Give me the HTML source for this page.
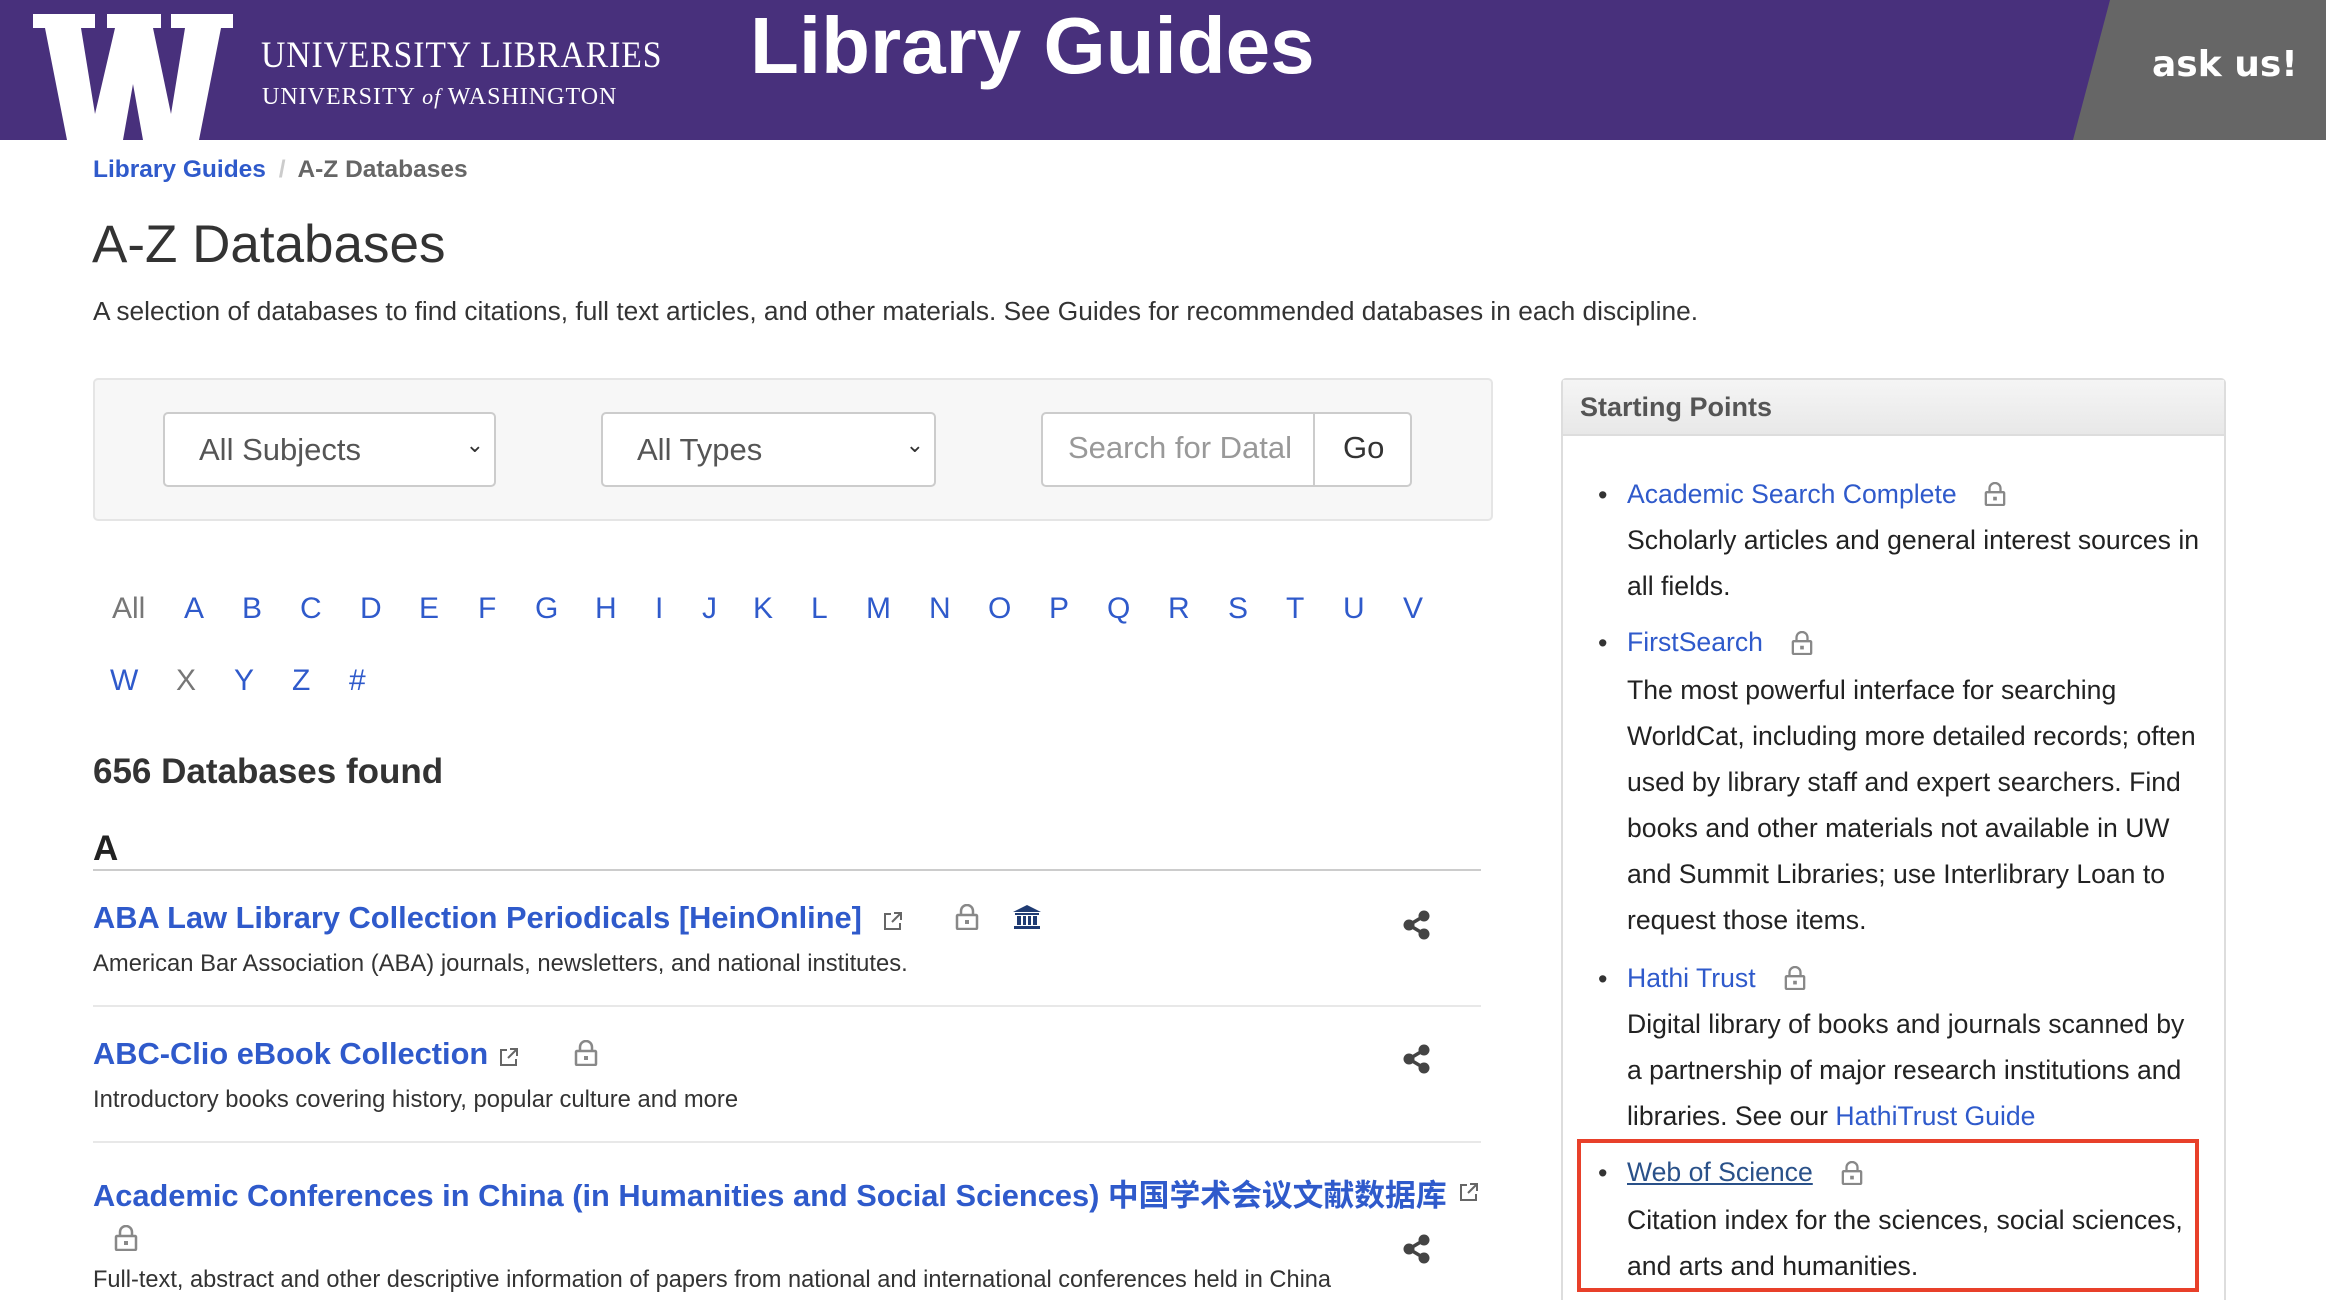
<!DOCTYPE html>
<html style="overflow:hidden;height:1300px"><head><meta charset="utf-8"><style>
*{margin:0;padding:0;box-sizing:border-box}
body{width:2326px;height:1300px;overflow:hidden;background:#fff;font-family:"Liberation Sans","Noto Sans CJK SC",sans-serif;color:#222;position:relative}
.a{position:absolute;white-space:nowrap}
.blue{color:#2f5acb}
.hdr{position:absolute;left:0;top:0;width:2326px;height:140px;background:#48307c}
.t{font-size:26.6px;color:#222;line-height:46px}
.b{position:absolute;font-size:27px;color:#333}
.lt{position:absolute;font-size:30px;color:#2f5acb;top:592px}
.lt2{position:absolute;font-size:30px;color:#2f5acb;top:664px}
</style></head><body>
<div class="hdr"></div>
<svg class="a" style="left:2070px;top:0" width="256" height="140"><polygon points="40,0 256,0 256,140 3,140" fill="#666"/></svg>
<div class="a" style="left:2152px;top:44px;font-family:'DejaVu Sans',sans-serif;font-weight:bold;font-size:36px;color:#fff">ask us!</div>
<svg class="a" style="left:33px;top:14px" width="200" height="126" viewBox="0 0 200 126"><path d="M0 0H62V14H48L62 100L82 14H74V0H128V14H120L138 100L152 14H138V0H200V14H188L166 126H110L100 70L90 126H34L12 14H0Z" fill="#fff"/></svg>
<div class="a" style="left:261px;top:34px;font-family:'Liberation Serif',serif;font-size:37px;color:#fff;letter-spacing:1px;transform:scaleX(0.91);transform-origin:left">UNIVERSITY LIBRARIES</div>
<div class="a" style="left:262px;top:84px;font-family:'Liberation Serif',serif;font-size:24px;color:#fff;letter-spacing:1px">UNIVERSITY <i style="font-size:22px">of</i> WASHINGTON</div>
<div class="a" style="left:750px;top:0px;font-size:80px;font-weight:bold;color:#fff">Library Guides</div>
<div class="a" style="left:93px;top:156px;font-size:24.5px;font-weight:bold"><span class="blue">Library Guides</span> <span style="color:#ccc;margin:0 6px">/</span> <span style="color:#666">A-Z Databases</span></div>
<div class="a" style="left:92px;top:214px;font-size:53px;color:#333">A-Z Databases</div>
<div class="a" style="left:93px;top:296px;font-size:26.3px;color:#333">A selection of databases to find citations, full text articles, and other materials. See Guides for recommended databases in each discipline.</div>
<div class="a" style="left:93px;top:378px;width:1400px;height:143px;background:#f7f7f7;border:2px solid #e5e5e5;border-radius:5px"></div>
<div class="a" style="left:163px;top:412px;width:333px;height:75px;background:#fff;border:2px solid #ccc;border-radius:5px;font-size:31px;color:#555;padding:18px 0 0 34px">All Subjects<span style="position:absolute;right:10px;top:18px;font-size:22px;color:#333">&#8964;</span></div>
<div class="a" style="left:601px;top:412px;width:335px;height:75px;background:#fff;border:2px solid #ccc;border-radius:5px;font-size:31px;color:#555;padding:18px 0 0 34px">All Types<span style="position:absolute;right:10px;top:18px;font-size:22px;color:#333">&#8964;</span></div>
<div class="a" style="left:1041px;top:412px;width:371px;height:75px;background:#fff;border:2px solid #ccc;border-radius:5px"></div>
<div class="a" style="left:1313px;top:413px;width:2px;height:73px;background:#ccc"></div>
<div class="a" style="left:1068px;top:430px;font-size:31px;color:#999">Search for Datal</div>
<div class="a" style="left:1343px;top:430px;font-size:31px;color:#333">Go</div>
<span class="lt" style="left:112px;color:#777">All</span>
<span class="lt" style="left:184px">A</span><span class="lt" style="left:242px">B</span><span class="lt" style="left:300px">C</span><span class="lt" style="left:360px">D</span><span class="lt" style="left:419px">E</span><span class="lt" style="left:478px">F</span><span class="lt" style="left:535px">G</span><span class="lt" style="left:595px">H</span><span class="lt" style="left:655px">I</span><span class="lt" style="left:702px">J</span><span class="lt" style="left:753px">K</span><span class="lt" style="left:811px">L</span><span class="lt" style="left:866px">M</span><span class="lt" style="left:929px">N</span><span class="lt" style="left:988px">O</span><span class="lt" style="left:1049px">P</span><span class="lt" style="left:1107px">Q</span><span class="lt" style="left:1168px">R</span><span class="lt" style="left:1228px">S</span><span class="lt" style="left:1286px">T</span><span class="lt" style="left:1343px">U</span><span class="lt" style="left:1403px">V</span>
<span class="lt2" style="left:110px">W</span><span class="lt2" style="left:176px;color:#777">X</span><span class="lt2" style="left:234px">Y</span><span class="lt2" style="left:292px">Z</span><span class="lt2" style="left:349px">#</span>
<div class="a" style="left:93px;top:752px;font-size:35px;font-weight:bold;color:#333">656 Databases found</div>
<div class="a" style="left:93px;top:829px;font-size:35px;font-weight:bold;color:#222">A</div>
<div class="a" style="left:93px;top:869px;width:1388px;height:2px;background:#ccc"></div>
<div class="a" style="left:93px;top:900px;font-size:30.8px;font-weight:bold;color:#2f5acb">ABA Law Library Collection Periodicals [HeinOnline]</div>
<svg class="a" style="left:882px;top:910px" width="22" height="22" viewBox="0 0 22 22" fill="none" stroke="#666" stroke-width="2"><path d="M9 4H3V19H18V13M12 3H19V10M19 3L10 12"/></svg>
<svg class="a" style="left:955px;top:904px" width="24" height="26" viewBox="0 0 24 26"><path d="M6 11V7a6 6 0 0 1 12 0v4" fill="none" stroke="#888" stroke-width="2.5"/><rect x="2" y="11" width="20" height="14" rx="1" fill="none" stroke="#888" stroke-width="2.5"/><rect x="10" y="16" width="4" height="4" fill="#888"/></svg>
<svg class="a" style="left:1013px;top:905px" width="28" height="24" viewBox="0 0 28 24"><path d="M14 0L28 7H0Z M2 8H26V10H2Z M4 11H8V20H4Z M10 11H13V20H10Z M15 11H18V20H15Z M20 11H24V20H20Z M1 21H27V24H1Z" fill="#1f3b73"/></svg>
<svg class="a" style="left:1403px;top:910px" width="28" height="30" viewBox="0 0 28 30"><g fill="#444"><circle cx="21" cy="6" r="5.5"/><circle cx="6" cy="15" r="5.5"/><circle cx="21" cy="24" r="5.5"/></g><path d="M21 6L6 15L21 24" stroke="#444" stroke-width="3.5" fill="none"/></svg>
<div class="a" style="left:93px;top:950px;font-size:23.8px;color:#333">American Bar Association (ABA) journals, newsletters, and national institutes.</div>
<div class="a" style="left:93px;top:1005px;width:1388px;height:2px;background:#e8e8e8"></div>
<div class="a" style="left:93px;top:1036px;font-size:30.8px;font-weight:bold;color:#2f5acb">ABC-Clio eBook Collection</div>
<svg class="a" style="left:498px;top:1046px" width="22" height="22" viewBox="0 0 22 22" fill="none" stroke="#666" stroke-width="2"><path d="M9 4H3V19H18V13M12 3H19V10M19 3L10 12"/></svg>
<svg class="a" style="left:574px;top:1040px" width="24" height="26" viewBox="0 0 24 26"><path d="M6 11V7a6 6 0 0 1 12 0v4" fill="none" stroke="#888" stroke-width="2.5"/><rect x="2" y="11" width="20" height="14" rx="1" fill="none" stroke="#888" stroke-width="2.5"/><rect x="10" y="16" width="4" height="4" fill="#888"/></svg>
<svg class="a" style="left:1403px;top:1044px" width="28" height="30" viewBox="0 0 28 30"><g fill="#444"><circle cx="21" cy="6" r="5.5"/><circle cx="6" cy="15" r="5.5"/><circle cx="21" cy="24" r="5.5"/></g><path d="M21 6L6 15L21 24" stroke="#444" stroke-width="3.5" fill="none"/></svg>
<div class="a" style="left:93px;top:1086px;font-size:23.8px;color:#333">Introductory books covering history, popular culture and more</div>
<div class="a" style="left:93px;top:1141px;width:1388px;height:2px;background:#e8e8e8"></div>
<div class="a" style="left:93px;top:1170px;font-size:30.8px;font-weight:bold;color:#2f5acb">Academic Conferences in China (in Humanities and Social Sciences) 中国学术会议文献数据库</div>
<svg class="a" style="left:1458px;top:1181px" width="22" height="22" viewBox="0 0 22 22" fill="none" stroke="#666" stroke-width="2"><path d="M9 4H3V19H18V13M12 3H19V10M19 3L10 12"/></svg>
<svg class="a" style="left:114px;top:1225px" width="24" height="26" viewBox="0 0 24 26"><path d="M6 11V7a6 6 0 0 1 12 0v4" fill="none" stroke="#888" stroke-width="2.5"/><rect x="2" y="11" width="20" height="14" rx="1" fill="none" stroke="#888" stroke-width="2.5"/><rect x="10" y="16" width="4" height="4" fill="#888"/></svg>
<svg class="a" style="left:1403px;top:1234px" width="28" height="30" viewBox="0 0 28 30"><g fill="#444"><circle cx="21" cy="6" r="5.5"/><circle cx="6" cy="15" r="5.5"/><circle cx="21" cy="24" r="5.5"/></g><path d="M21 6L6 15L21 24" stroke="#444" stroke-width="3.5" fill="none"/></svg>
<div class="a" style="left:93px;top:1267px;font-size:23.6px;color:#333">Full-text, abstract and other descriptive information of papers from national and international conferences held in China</div>
<div class="a" style="left:1561px;top:378px;width:665px;height:922px;border:2px solid #ddd;border-bottom:none;border-radius:5px 5px 0 0"></div>
<div class="a" style="left:1563px;top:380px;width:661px;height:56px;background:linear-gradient(#f5f5f5,#e8e8e8);border-bottom:2px solid #ddd"></div>
<div class="a" style="left:1580px;top:392px;font-size:27px;font-weight:bold;color:#555">Starting Points</div>
<div class="b" style="left:1598px;top:480px">•</div>
<div class="a t" style="left:1627px;top:471px"><span class="blue">Academic Search Complete</span></div>
<svg class="a" style="left:1984px;top:482px" width="22" height="24" viewBox="0 0 24 26"><path d="M6 11V7a6 6 0 0 1 12 0v4" fill="none" stroke="#888" stroke-width="2.5"/><rect x="2" y="11" width="20" height="14" rx="1" fill="none" stroke="#888" stroke-width="2.5"/><rect x="10" y="16" width="4" height="4" fill="#888"/></svg>
<div class="a t" style="left:1627px;top:517px">Scholarly articles and general interest sources in</div>
<div class="a t" style="left:1627px;top:563px">all fields.</div>
<div class="b" style="left:1598px;top:628px">•</div>
<div class="a t" style="left:1627px;top:619px"><span class="blue">FirstSearch</span></div>
<svg class="a" style="left:1791px;top:631px" width="22" height="24" viewBox="0 0 24 26"><path d="M6 11V7a6 6 0 0 1 12 0v4" fill="none" stroke="#888" stroke-width="2.5"/><rect x="2" y="11" width="20" height="14" rx="1" fill="none" stroke="#888" stroke-width="2.5"/><rect x="10" y="16" width="4" height="4" fill="#888"/></svg>
<div class="a t" style="left:1627px;top:667px">The most powerful interface for searching</div>
<div class="a t" style="left:1627px;top:713px">WorldCat, including more detailed records; often</div>
<div class="a t" style="left:1627px;top:759px">used by library staff and expert searchers. Find</div>
<div class="a t" style="left:1627px;top:805px">books and other materials not available in UW</div>
<div class="a t" style="left:1627px;top:851px">and Summit Libraries; use Interlibrary Loan to</div>
<div class="a t" style="left:1627px;top:897px">request those items.</div>
<div class="b" style="left:1598px;top:964px">•</div>
<div class="a t" style="left:1627px;top:955px"><span class="blue">Hathi Trust</span></div>
<svg class="a" style="left:1784px;top:966px" width="22" height="24" viewBox="0 0 24 26"><path d="M6 11V7a6 6 0 0 1 12 0v4" fill="none" stroke="#888" stroke-width="2.5"/><rect x="2" y="11" width="20" height="14" rx="1" fill="none" stroke="#888" stroke-width="2.5"/><rect x="10" y="16" width="4" height="4" fill="#888"/></svg>
<div class="a t" style="left:1627px;top:1001px">Digital library of books and journals scanned by</div>
<div class="a t" style="left:1627px;top:1047px">a partnership of major research institutions and</div>
<div class="a t" style="left:1627px;top:1093px">libraries. See our <span class="blue">HathiTrust Guide</span></div>
<div class="a" style="left:1577px;top:1139px;width:622px;height:153px;border:4px solid #e8402a"></div>
<div class="b" style="left:1598px;top:1158px">•</div>
<div class="a t" style="left:1627px;top:1149px"><span style="color:#2a5189;text-decoration:underline">Web of Science</span></div>
<svg class="a" style="left:1841px;top:1161px" width="22" height="24" viewBox="0 0 24 26"><path d="M6 11V7a6 6 0 0 1 12 0v4" fill="none" stroke="#888" stroke-width="2.5"/><rect x="2" y="11" width="20" height="14" rx="1" fill="none" stroke="#888" stroke-width="2.5"/><rect x="10" y="16" width="4" height="4" fill="#888"/></svg>
<div class="a t" style="left:1627px;top:1197px">Citation index for the sciences, social sciences,</div>
<div class="a t" style="left:1627px;top:1243px">and arts and humanities.</div>
</body></html>
